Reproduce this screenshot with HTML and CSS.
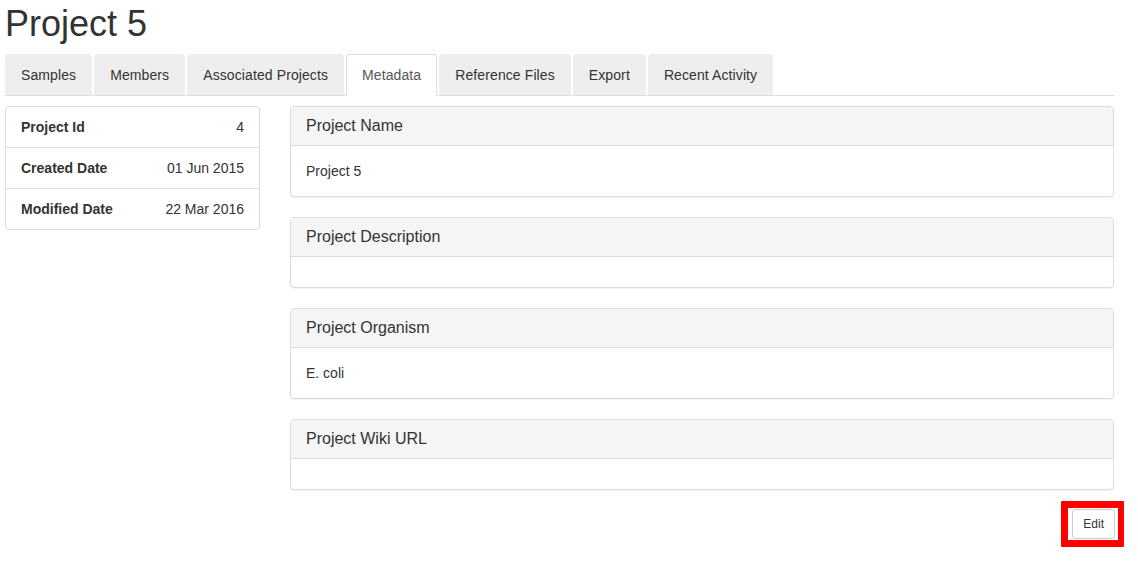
FILE: index.html
```html
<!DOCTYPE html>
<html lang="en">
<head>
<meta charset="utf-8">
<title>Project 5</title>
<link rel="stylesheet" href="styles.css">
</head>
<body>
<div class="page">
  <h1 class="title">Project 5</h1>
  <ul class="tabs">
    <li class="tab"><a href="#">Samples</a></li>
    <li class="tab"><a href="#">Members</a></li>
    <li class="tab"><a href="#">Associated Projects</a></li>
    <li class="tab active"><a href="#">Metadata</a></li>
    <li class="tab"><a href="#">Reference Files</a></li>
    <li class="tab"><a href="#">Export</a></li>
    <li class="tab"><a href="#">Recent Activity</a></li>
  </ul>
  <div class="content">
    <div class="info">
      <div class="info-row"><span class="info-label">Project Id</span><span class="info-value">4</span></div>
      <div class="info-row"><span class="info-label">Created Date</span><span class="info-value">01 Jun 2015</span></div>
      <div class="info-row"><span class="info-label">Modified Date</span><span class="info-value">22 Mar 2016</span></div>
    </div>
    <div class="main">
      <div class="panel">
        <div class="panel-heading">Project Name</div>
        <div class="panel-body">Project 5</div>
      </div>
      <div class="panel">
        <div class="panel-heading">Project Description</div>
        <div class="panel-body"></div>
      </div>
      <div class="panel">
        <div class="panel-heading">Project Organism</div>
        <div class="panel-body">E. coli</div>
      </div>
      <div class="panel">
        <div class="panel-heading">Project Wiki URL</div>
        <div class="panel-body"></div>
      </div>
      <div class="actions">
        <span class="highlight"><button class="btn" type="button">Edit</button></span>
      </div>
    </div>
  </div>
</div>
</body>
</html>
```
FILE: styles.css
```css
* { box-sizing: border-box; }
html, body { margin: 0; padding: 0; background: #fff; }
body {
  font-family: "Liberation Sans", Arial, Helvetica, sans-serif;
  font-size: 14px;
  line-height: 20px;
  color: #333;
}
.page {
  width: 1109px;
  margin-left: 5px;
  padding-bottom: 16px;
}
.title {
  margin: 4px 0 10px 0;
  font-size: 36px;
  font-weight: 500;
  line-height: 1.1;
  color: #333;
}
.tabs {
  list-style: none;
  margin: 0;
  padding: 0;
  display: flex;
  border-bottom: 1px solid #ddd;
}
.tab {
  margin-bottom: -1px;
  margin-right: 2px;
}
.tab a {
  display: block;
  padding: 10px 15px;
  line-height: 20px;
  letter-spacing: 0.1px;
  color: #333;
  text-decoration: none;
  background: #eee;
  border: 1px solid #eee;
  border-bottom-color: #ddd;
  border-radius: 4px 4px 0 0;
}
.tab.active a {
  background: #fff;
  color: #555;
  border-color: #ddd #ddd transparent #ddd;
}
.content {
  margin-top: 10px;
  display: grid;
  grid-template-columns: 255px 1fr;
  column-gap: 30px;
  align-items: start;
}
.info {
  border: 1px solid #ddd;
  border-radius: 4px;
}
.info-row {
  display: flex;
  justify-content: space-between;
  padding: 10px 15px;
  border-top: 1px solid #ddd;
}
.info-row:first-child { border-top: 0; }
.info-label { font-weight: bold; }
.panel {
  border: 1px solid #ddd;
  border-radius: 4px;
  box-shadow: 0 1px 1px rgba(0,0,0,0.05);
  margin-bottom: 20px;
  background: #fff;
}
.panel-heading {
  background: #f5f5f5;
  border-bottom: 1px solid #ddd;
  border-radius: 3px 3px 0 0;
  padding: 10px 15px;
  font-size: 16px;
  line-height: 18px;
  color: #333;
}
.panel-body {
  padding: 15px;
  min-height: 30px;
}
.actions {
  display: flex;
  justify-content: flex-end;
  margin-top: -9px;
  margin-right: -10px;
}
.highlight {
  display: flex;
  border: 7px solid #ff0000;
  border-right-width: 6px;
  border-bottom-width: 7px;
  padding: 1px 3px 1px 4px;
  border-radius: 1px;
}
.btn {
  font-family: inherit;
  font-size: 12px;
  line-height: 1.5;
  padding: 5px 10px;
  color: #333;
  background: #fff;
  border: 1px solid #ccc;
  border-radius: 3px;
  cursor: pointer;
}
```
